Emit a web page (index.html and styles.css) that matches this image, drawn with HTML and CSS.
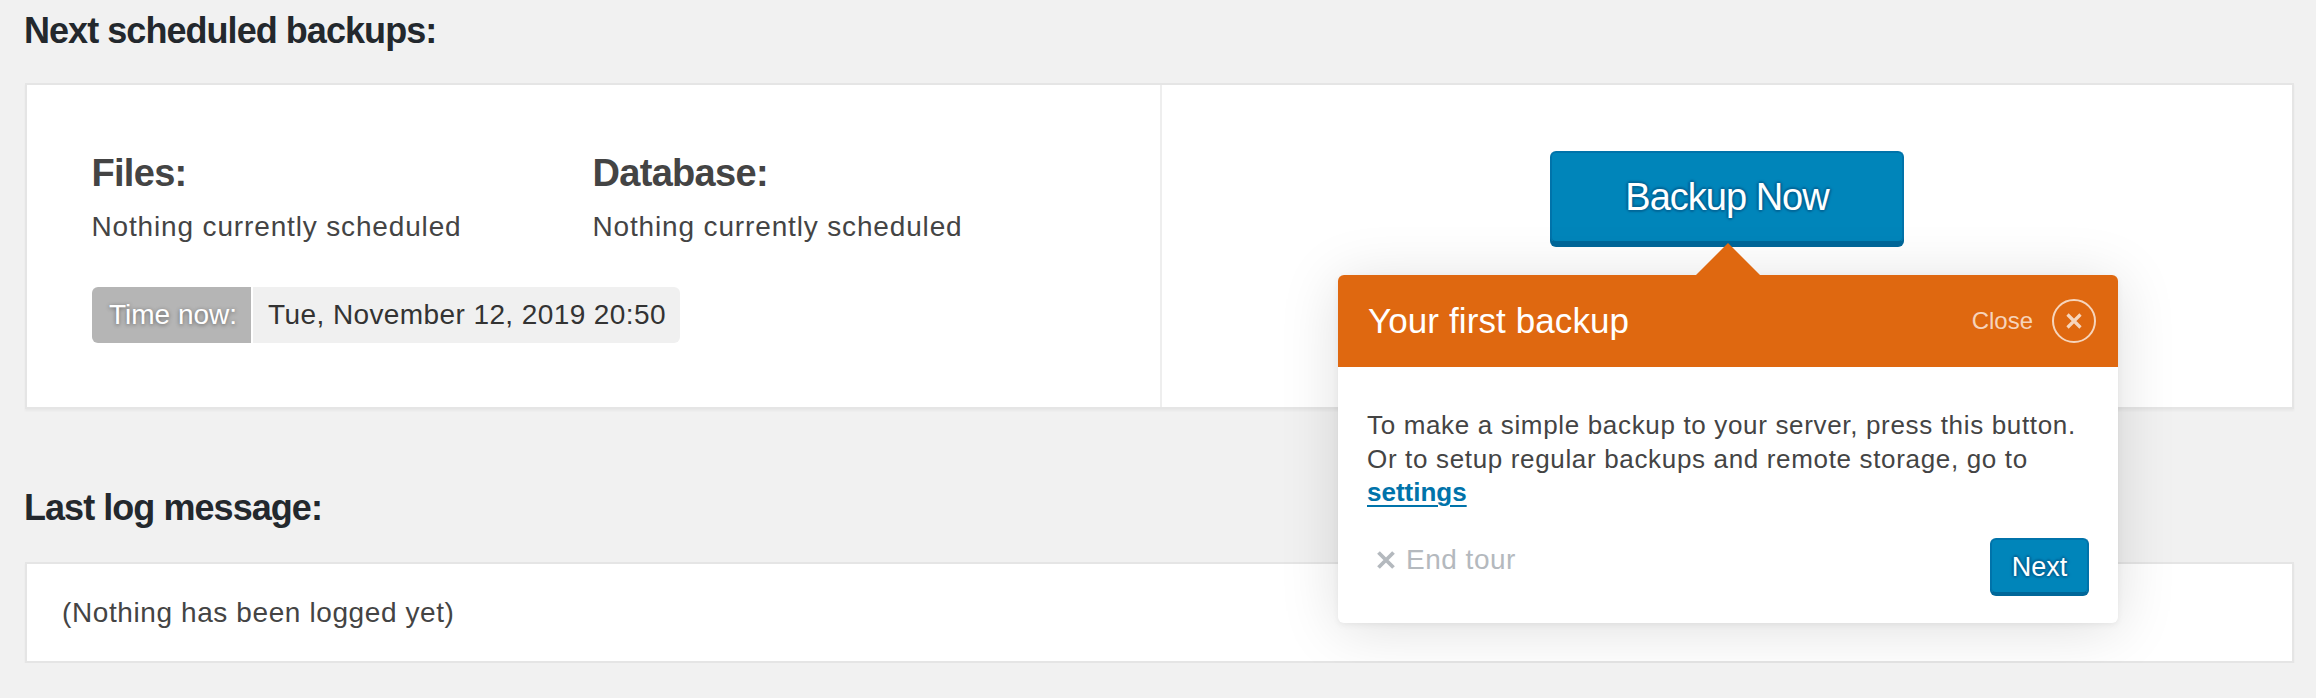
FILE: index.html
```html
<!DOCTYPE html>
<html lang="en">
<head>
<meta charset="utf-8">
<title>Backups</title>
<link rel="stylesheet" href="styles.css">
</head>
<body>
<div class="wrap">
  <h2 class="section-title first">Next scheduled backups:</h2>
  <div class="card schedule">
    <div class="schedule-left">
      <div class="entities">
        <div class="entity">
          <h3 class="entity-title">Files:</h3>
          <p class="entity-text">Nothing currently scheduled</p>
        </div>
        <div class="entity">
          <h3 class="entity-title">Database:</h3>
          <p class="entity-text">Nothing currently scheduled</p>
        </div>
      </div>
      <div class="time-now">
        <span class="time-label">Time now:</span>
        <span class="time-value">Tue, November 12, 2019 20:50</span>
      </div>
    </div>
    <div class="schedule-right">
      <button class="btn btn-hero" type="button">Backup Now</button>
    </div>
  </div>

  <h2 class="section-title log-title">Last log message:</h2>
  <div class="card log">
    <p class="log-text">(Nothing has been logged yet)</p>
  </div>

  <div class="tour">
    <div class="tour-header">
      <span class="tour-title">Your first backup</span>
      <span class="tour-close">
        <span class="tour-close-text">Close</span>
        <span class="tour-close-circle">
          <svg width="18" height="18" viewBox="0 0 18 18" aria-hidden="true"><path d="M2.5 2.5 L15.5 15.5 M15.5 2.5 L2.5 15.5" stroke="currentColor" stroke-width="3.2" fill="none"/></svg>
        </span>
      </span>
    </div>
    <div class="tour-body">
      <p class="tour-text">To make a simple backup to your server, press this button. Or to setup regular backups and remote storage, go to <a class="tour-link" href="#">settings</a></p>
      <div class="tour-footer">
        <span class="end-tour">
          <svg width="20" height="20" viewBox="0 0 20 20" aria-hidden="true"><path d="M2.5 2.5 L17.5 17.5 M17.5 2.5 L2.5 17.5" stroke="currentColor" stroke-width="3.8" fill="none"/></svg>
          <span>End tour</span>
        </span>
        <button class="btn btn-next" type="button">Next</button>
      </div>
    </div>
  </div>
</div>
</body>
</html>
```

FILE: styles.css
```css
html, body {
  margin: 0;
  padding: 0;
}

body {
  background: #f1f1f1;
  font-family: "Liberation Sans", Arial, sans-serif;
  color: #444;
}

.wrap {
  position: relative;
  padding: 8.5px 22px 0 25px;
}

.section-title {
  margin: 0 0 0 -1px;
  font-size: 36px;
  line-height: 44px;
  font-weight: bold;
  color: #23282d;
  letter-spacing: -0.95px;
}

.section-title.first {
  margin-bottom: 30.5px;
}

.section-title.log-title {
  margin-top: 76.5px;
  margin-bottom: 32.5px;
}

.card {
  background: #fff;
  border: 2px solid #e5e5e5;
  box-shadow: 0 2px 2px rgba(0, 0, 0, 0.04);
}

.schedule {
  display: flex;
}

.schedule-left {
  flex: 0 0 1135px;
  box-sizing: border-box;
  border-right: 2px solid #eeeeee;
  padding: 65px 0 64px 64.5px;
}

.entities {
  display: grid;
  grid-template-columns: 501px 501px;
}

.entity-title {
  margin: 0;
  font-size: 38px;
  line-height: 46px;
  font-weight: bold;
  color: #444;
  letter-spacing: -0.7px;
}

.entity-text {
  margin: 12.5px 0 0;
  font-size: 28px;
  line-height: 36px;
  letter-spacing: 0.85px;
  color: #444;
}

.time-now {
  display: inline-flex;
  margin: 42.5px 0 0 0.5px;
  height: 56px;
  border-radius: 6px;
  overflow: hidden;
  font-size: 28px;
}

.time-label {
  display: flex;
  align-items: center;
  padding: 0 14px 0 17px;
  background: #b5b5b5;
  color: #fff;
  text-shadow: 0 1px 4px rgba(0, 0, 0, 0.45);
}

.time-value {
  display: flex;
  align-items: center;
  padding: 0 14px 0 15px;
  border-left: 2px solid #fff;
  background: #f0f0f0;
  color: #333;
  letter-spacing: 0.4px;
}

.schedule-right {
  flex: 1;
  display: flex;
  justify-content: center;
  align-items: flex-start;
  padding-top: 66px;
}

.btn {
  box-sizing: border-box;
  margin: 0;
  padding: 0;
  display: flex;
  align-items: center;
  justify-content: center;
  background: #0085ba;
  border: 2px solid #0073aa;
  border-bottom-color: #006799;
  border-radius: 6px;
  color: #fff;
  font-family: "Liberation Sans", Arial, sans-serif;
  text-shadow: 0 -2px 2px #006799, 2px 0 2px #006799, 0 2px 2px #006799, -2px 0 2px #006799;
  cursor: pointer;
}

.btn-hero {
  width: 354px;
  height: 92px;
  font-size: 38px;
  letter-spacing: -1px;
  box-shadow: 0 4px 0 #006799;
}

.log {
  box-sizing: border-box;
  height: 101px;
  display: flex;
  align-items: center;
  padding-left: 35px;
}

.log-text {
  margin: 0;
  font-size: 28px;
  letter-spacing: 0.6px;
  color: #444;
}

/* Tour popover */
.tour {
  position: absolute;
  left: 1338px;
  top: 275px;
  width: 780px;
  background: #fff;
  border-radius: 6px;
  box-shadow: 0 6px 60px rgba(0, 0, 0, 0.13), 0 2px 6px rgba(0, 0, 0, 0.06);
}

.tour::before {
  content: "";
  position: absolute;
  top: -32px;
  left: 358px;
  width: 0;
  height: 0;
  border-left: 32px solid transparent;
  border-right: 32px solid transparent;
  border-bottom: 32px solid #df6810;
}

.tour-header {
  height: 92px;
  box-sizing: border-box;
  display: flex;
  align-items: center;
  padding: 0 22px 0 30px;
  background: #df6810;
  border-radius: 6px 6px 0 0;
  color: #fff;
}

.tour-title {
  flex: 1;
  font-size: 35px;
  letter-spacing: 0.1px;
}

.tour-close {
  display: flex;
  align-items: center;
  gap: 19px;
  color: rgba(255, 255, 255, 0.72);
}

.tour-close-text {
  font-size: 24px;
}

.tour-close-circle {
  box-sizing: border-box;
  width: 44px;
  height: 44px;
  border: 2px solid rgba(255, 255, 255, 0.72);
  border-radius: 50%;
  display: flex;
  align-items: center;
  justify-content: center;
}

.tour-body {
  padding: 42.2px 27px 29px 29px;
}

.tour-text {
  margin: 0;
  font-size: 26px;
  line-height: 33.5px;
  letter-spacing: 0.66px;
  color: #444;
}

.tour-link {
  font-weight: bold;
  color: #0073aa;
  letter-spacing: 0;
  text-decoration: underline;
  text-decoration-thickness: 2px;
  text-underline-offset: 4px;
}

.tour-footer {
  display: flex;
  justify-content: space-between;
  align-items: center;
  margin-top: 28.3px;
  margin-right: 2px;
}

.end-tour {
  display: inline-flex;
  align-items: center;
  gap: 10px;
  margin: 0 0 12px 9px;
  font-size: 28px;
  line-height: 32px;
  letter-spacing: 0.5px;
  color: #b4b9be;
}

.btn-next {
  width: 99px;
  height: 56px;
  padding-top: 4px;
  font-size: 27px;
  box-shadow: 0 2px 0 #006799;
}
```
